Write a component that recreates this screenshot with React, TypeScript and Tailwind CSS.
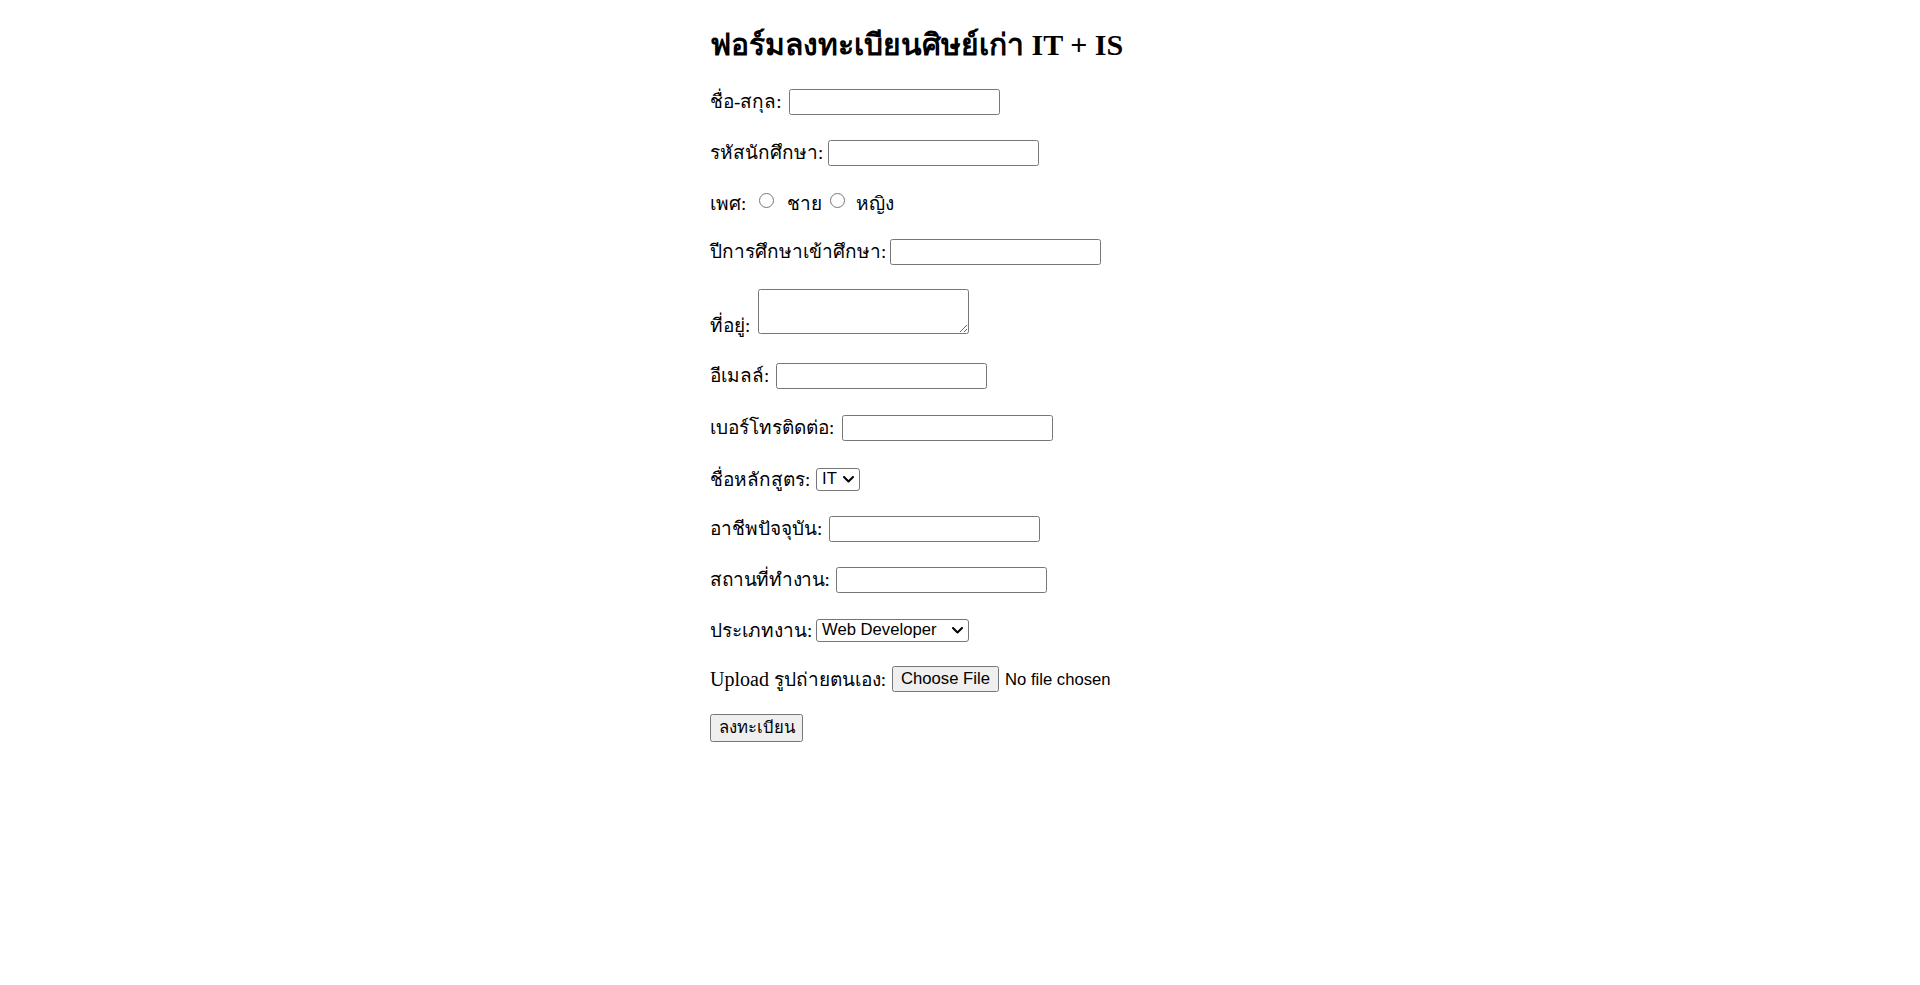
import * as React from "react";

const inputCls =
  "box-border h-[26px] w-[211px] rounded-[2.5px] border border-[#767676] bg-white px-[3px] font-['Liberation_Sans',sans-serif] text-[16.67px] text-black outline-none";

const labelCls = "shrink-0 whitespace-nowrap text-[19px]";

function Chevron() {
  return (
    <svg width="11" height="7" viewBox="0 0 11 7" className="pointer-events-none">
      <polyline
        points="1,1 5.5,5.5 10,1"
        fill="none"
        stroke="#000"
        strokeWidth="2"
        strokeLinecap="round"
        strokeLinejoin="round"
      />
    </svg>
  );
}

function FakeSelect({ value, width }: { value: string; width: string }) {
  return (
    <div
      className={`box-border flex h-[23px] ${width} items-center justify-between rounded-[3px] border border-[#767676] bg-white pl-[5px] pr-[5px] font-['Liberation_Sans',sans-serif] text-[16.67px] leading-none text-black`}
    >
      <span>{value}</span>
      <Chevron />
    </div>
  );
}

type TextRow = { label: string; labelW: string; mt: string; tight?: boolean };

const firstRows: TextRow[] = [
  { label: "ชื่อ-สกุล:", labelW: "w-[79px]", mt: "mt-[26px]" },
  { label: "รหัสนักศึกษา:", labelW: "w-[118px]", mt: "mt-[25px]" },
];

function Row({ label, labelW, mt, tight }: TextRow) {
  return (
    <div className={`flex h-[26px] items-center ${mt}`}>
      <span className={`${labelW} ${labelCls} leading-[26px] ${tight ? "tracking-[-0.4px]" : ""}`}>
        {label}
      </span>
      <input type="text" className={inputCls} />
    </div>
  );
}

export default function App() {
  return (
    <div className="min-h-screen bg-white font-['Liberation_Serif',serif] text-[20px] text-black">
      <form className="mx-auto flex w-[500px] flex-col pt-[27px]" onSubmit={(e) => e.preventDefault()}>
        <h2 className="h-[36px] whitespace-nowrap text-[30px] font-bold leading-[36px]">
          ฟอร์มลงทะเบียนศิษย์เก่า IT + IS
        </h2>

        {firstRows.map((r) => (
          <Row key={r.label} {...r} />
        ))}

        {/* gender */}
        <div className="mt-[25px] flex h-[26px] items-start">
          <span className={`w-[49px] ${labelCls} leading-[26px]`}>เพศ:</span>
          <input type="radio" name="gender" className="m-0 mt-[2px] h-[15px] w-[15px]" />
          <span className={`ml-[13px] w-[43px] ${labelCls} leading-[26px]`}>ชาย</span>
          <input type="radio" name="gender" className="m-0 mt-[2px] h-[15px] w-[15px]" />
          <span className={`ml-[11px] ${labelCls} leading-[26px]`}>หญิง</span>
        </div>

        <Row label="ปีการศึกษาเข้าศึกษา:" labelW="w-[180px]" mt="mt-[22px]" />

        {/* address */}
        <div className="mt-[24px] flex h-[45px] items-end">
          <span className={`mb-[-5px] w-[48px] ${labelCls} leading-[26px]`}>ที่อยู่:</span>
          <textarea className="box-border h-[45px] w-[211px] rounded-[2.5px] border border-[#767676] bg-white font-['Liberation_Sans',sans-serif] text-[16.67px] outline-none" />
        </div>

        <Row label="อีเมลล์:" labelW="w-[66px]" mt="mt-[29px]" />
        <Row label="เบอร์โทรติดต่อ:" labelW="w-[132px]" mt="mt-[26px]" />

        <div className="mt-[27px] flex h-[23px] items-center">
          <span className={`w-[106px] ${labelCls} leading-[23px]`}>ชื่อหลักสูตร:</span>
          <FakeSelect value="IT" width="w-[44px]" />
        </div>

        <Row label="อาชีพปัจจุบัน:" labelW="w-[119px]" mt="mt-[25px]" />
        <Row label="สถานที่ทำงาน:" labelW="w-[126px]" mt="mt-[25px]" tight />

        <div className="mt-[26px] flex h-[23px] items-center">
          <span className={`w-[106px] ${labelCls} leading-[23px]`}>ประเภทงาน:</span>
          <FakeSelect value="Web Developer" width="w-[153px]" />
        </div>

        <div className="mt-[24px] flex h-[26px] items-center">
          <span className={`w-[182px] ${labelCls} leading-[26px]`}>
            <span className="text-[20px]">Upload</span> รูปถ่ายตนเอง:
          </span>
          <button
            type="button"
            className="box-border h-[26px] w-[107px] rounded-[2.5px] border border-[#767676] bg-[#efefef] font-['Liberation_Sans',sans-serif] text-[16.67px] leading-none text-black"
          >
            Choose File
          </button>
          <span className="ml-[6px] font-['Liberation_Sans',sans-serif] text-[16.67px]">No file chosen</span>
        </div>

        <div className="mt-[22px] flex">
          <button
            type="submit"
            className="box-border h-[28px] w-[93px] rounded-[2.5px] border border-[#767676] bg-[#efefef] font-['Liberation_Sans',sans-serif] text-[16.67px] leading-none text-black"
          >
            ลงทะเบียน
          </button>
        </div>
      </form>
    </div>
  );
}
